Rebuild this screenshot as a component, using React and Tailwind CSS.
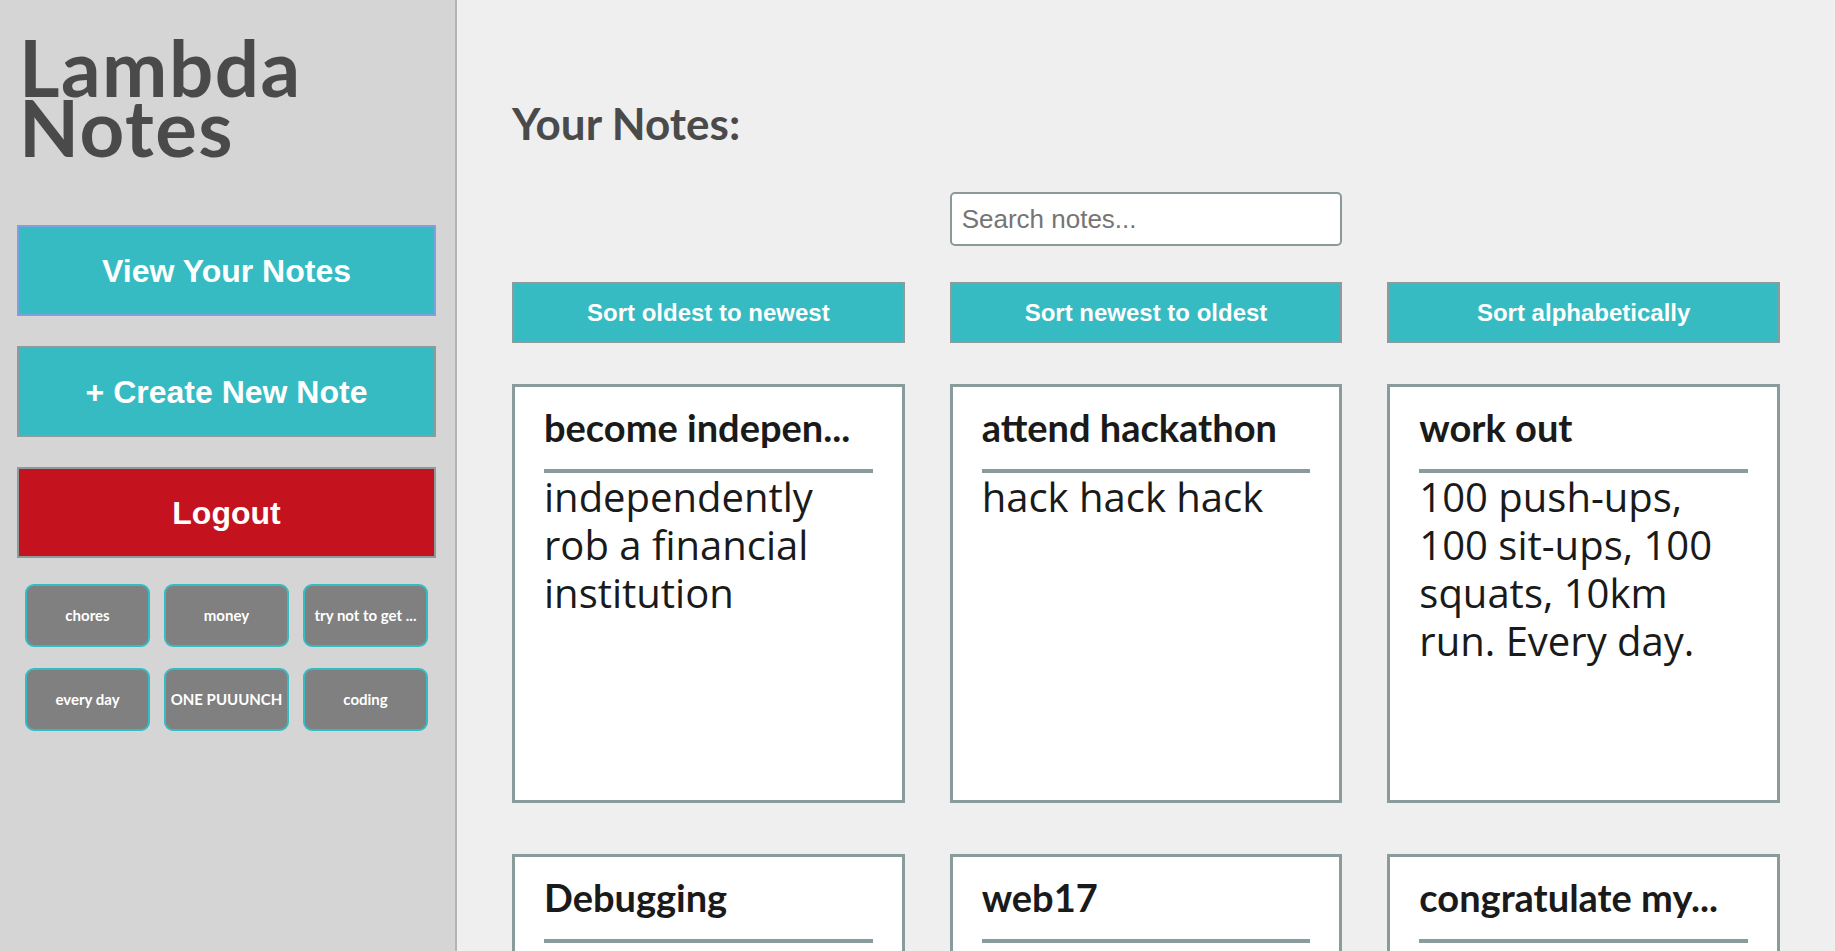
import React from "react";

const tags = ["chores", "money", "try not to get ...", "every day", "ONE PUUUNCH", "coding"];

const notes = [
  { title: "become indepen...", body: "independently rob a financial institution" },
  { title: "attend hackathon", body: "hack hack hack" },
  { title: "work out", body: "100 push-ups, 100 sit-ups, 100 squats, 10km run. Every day." },
  { title: "Debugging", body: "https://stackoverflow.com/questions", link: true },
  { title: "web17", body: "Lambda School rocks" },
  { title: "congratulate my...", body: "friends on their graduation" },
];

export default function App() {
  return (
    <div className="flex min-h-screen bg-[#f0eff0]">
      <aside className="w-[457px] shrink-0 bg-[#d5d5d5] border-r-2 border-[#b4b4b4] pl-[17px] pr-[19px] pt-[37px]">
        <h1 className="font-['Lato',sans-serif] font-bold text-[78px] leading-[60px] text-[#4a4a4a] pl-[2px] tracking-[1.5px]">
          Lambda
          <br />
          Notes
        </h1>
        <div className="mt-[68px] flex flex-col gap-[30px] font-['Liberation_Sans',Arial,sans-serif] font-bold text-[32px] text-white">
          <button className="h-[91px] w-full bg-[#36bbc3] border-2 border-[#7fa0de]">View Your Notes</button>
          <button className="h-[91px] w-full bg-[#36bbc3] border-2 border-[#8f9a9a]">+ Create New Note</button>
          <button className="h-[91px] w-full bg-[#c4131f] border-2 border-[#8f9a9a]">Logout</button>
        </div>
        <div className="mt-[26px] px-[8px] grid grid-cols-3 gap-x-[14px] gap-y-[21px]">
          {tags.map((t) => (
            <div
              key={t}
              className="h-[63px] bg-[#808080] border-2 border-[#36bbc3] rounded-[9px] flex items-center justify-center px-[3px] font-['Lato',sans-serif] font-bold text-[15px] text-white whitespace-nowrap overflow-hidden"
            >
              {t}
            </div>
          ))}
        </div>
      </aside>
      <main className="flex-1 px-[55px] pt-[97px] pb-[40px]">
        <h2 className="font-['Lato',sans-serif] font-bold text-[44px] leading-[53px] text-[#4a4a4a]">Your Notes:</h2>
        <div className="mt-[42px] grid grid-cols-3 gap-x-[45px]">
          <input
            className="col-start-2 h-[54px] bg-white border-2 border-[#8a9a9a] rounded-[5px] pl-[10px] font-['Liberation_Sans',Arial,sans-serif] text-[26px] text-[#333] placeholder:text-[#757575] outline-none"
            placeholder="Search notes..."
          />
        </div>
        <div className="mt-[36px] grid grid-cols-3 gap-x-[45px] font-['Liberation_Sans',Arial,sans-serif] font-bold text-[24px] text-white">
          <button className="h-[61px] bg-[#36bbc3] border-2 border-[#8f9a9a]">Sort oldest to newest</button>
          <button className="h-[61px] bg-[#36bbc3] border-2 border-[#8f9a9a]">Sort newest to oldest</button>
          <button className="h-[61px] bg-[#36bbc3] border-2 border-[#8f9a9a]">Sort alphabetically</button>
        </div>
        <div className="mt-[41px] grid grid-cols-3 gap-x-[45px] gap-y-[51px]">
          {notes.map((n) => (
            <div key={n.title} className="h-[419px] bg-white border-[3px] border-[#8a9b9b] pt-[17px] px-[29px] overflow-hidden">
              <h3 className="font-['Lato',sans-serif] font-bold text-[38px] leading-[46px] text-[#1a1a1a] whitespace-nowrap overflow-hidden text-ellipsis">
                {n.title}
              </h3>
              <div className="mt-[19px] h-[4px] bg-[#8a9b9b]" />
              <p
                className={
                  n.link
                    ? "font-['Open_Sans',sans-serif] text-[40px] leading-[48px] text-[#551a8b] underline break-all"
                    : "font-['Open_Sans',sans-serif] text-[40px] leading-[48px] text-[#1a1a1a]"
                }
              >
                {n.body}
              </p>
            </div>
          ))}
        </div>
      </main>
    </div>
  );
}
